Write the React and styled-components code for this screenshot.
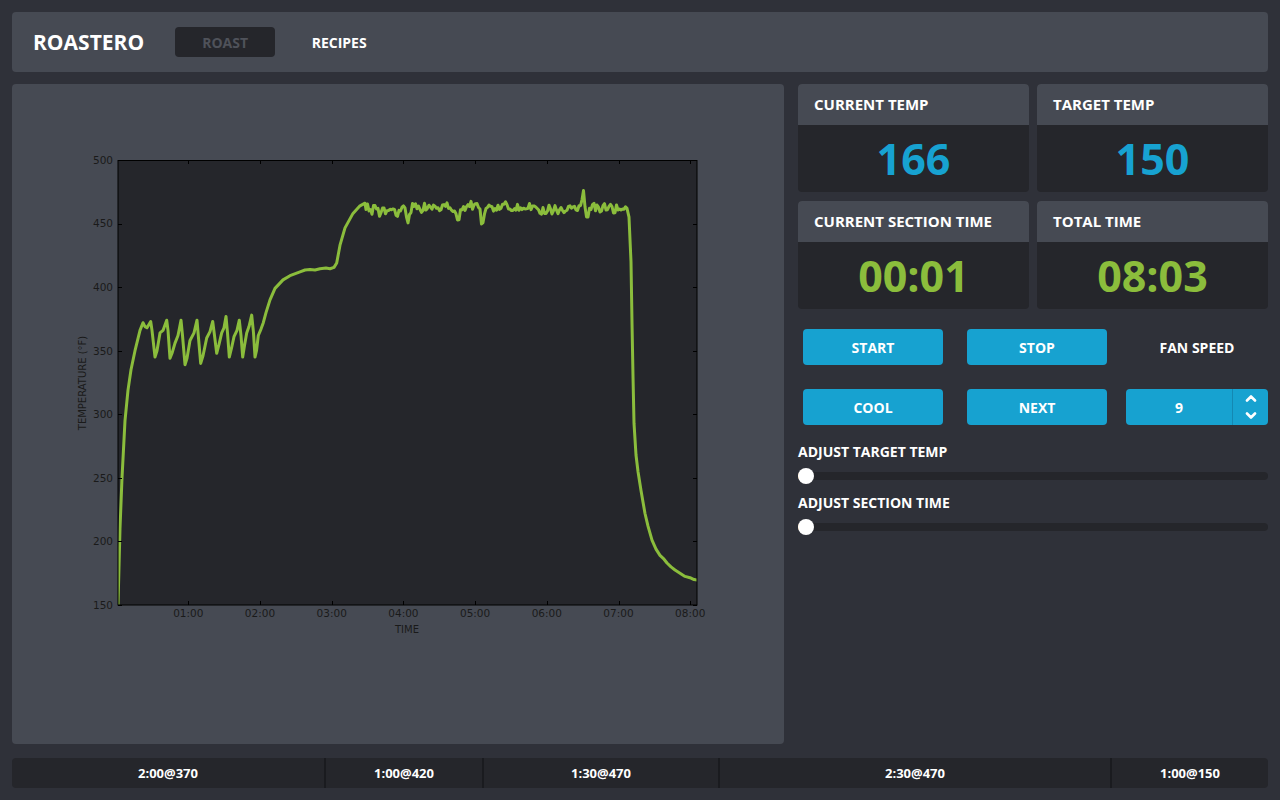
import React from 'react';
import styled, { createGlobalStyle } from 'styled-components';

const GlobalStyle = createGlobalStyle`
  html, body {
    margin: 0;
    padding: 0;
    background: #2f3139;
  }
  body {
    font-family: 'Open Sans', 'Liberation Sans', sans-serif;
    color: #fff;
  }
  * { box-sizing: border-box; }
`;

const Page = styled.div`
  width: 1280px;
  height: 800px;
  padding: 12px;
  display: flex;
  flex-direction: column;
  gap: 12px;
`;

const Header = styled.header`
  height: 60px;
  background: #464a53;
  border-radius: 4px;
  display: flex;
  align-items: center;
  padding-left: 21px;
`;

const Brand = styled.div`
  font-size: 21px;
  font-weight: 700;
  margin-right: 31px;
`;

const Tabs = styled.nav`
  display: flex;
  gap: 14px;
`;

const Tab = styled.div`
  width: 100px;
  height: 30px;
  border-radius: 4px;
  display: flex;
  align-items: center;
  justify-content: center;
  font-size: 14px;
  font-weight: 700;
  background: ${(p) => (p.active ? '#25262b' : 'transparent')};
  color: ${(p) => (p.active ? '#4f525a' : '#fff')};
`;

const Main = styled.main`
  height: 660px;
  display: flex;
  gap: 14px;
`;

const ChartPanel = styled.section`
  width: 772px;
  background: #464a53;
  border-radius: 4px;
  overflow: hidden;

  svg { display: block; }
`;

const Side = styled.aside`
  flex: 1;
  display: flex;
  flex-direction: column;
`;

const CardGrid = styled.div`
  display: grid;
  grid-template-columns: 1fr 1fr;
  column-gap: 8px;
  row-gap: 9px;
`;

const Card = styled.div`
  height: 108px;
  border-radius: 4px;
  overflow: hidden;
  display: flex;
  flex-direction: column;
  background: #25262b;
`;

const CardTitle = styled.div`
  height: 41px;
  background: #464a53;
  padding-left: 16px;
  padding-bottom: 1px;
  display: flex;
  align-items: center;
  font-size: 15px;
  font-weight: 700;
`;

const CardValue = styled.div`
  flex: 1;
  display: flex;
  align-items: center;
  justify-content: center;
  font-size: 43px;
  font-weight: 700;
  color: ${(p) => (p.tone === 'green' ? '#8bbd3c' : '#17a2d1')};
`;

const Controls = styled.div`
  margin-top: 20px;
  padding-left: 5px;
  display: grid;
  grid-template-columns: 140px 24px 140px 19px 142px;
  grid-auto-rows: 36px;
  row-gap: 24px;
`;

const Button = styled.button`
  grid-column: ${(p) => p.col};
  border: none;
  border-radius: 4px;
  background: #17a2d0;
  color: #fff;
  font-family: inherit;
  font-size: 14px;
  font-weight: 700;
  padding: 0;
`;

const FanLabel = styled.div`
  grid-column: 5;
  display: flex;
  align-items: center;
  justify-content: center;
  font-size: 14px;
  font-weight: 700;
`;

const Spinner = styled.div`
  grid-column: 5;
  display: flex;
  border-radius: 4px;
  background: #17a2d0;
  overflow: hidden;
`;

const SpinValue = styled.div`
  flex: 1;
  display: flex;
  align-items: center;
  justify-content: center;
  font-size: 14px;
  font-weight: 700;
`;

const SpinArrows = styled.div`
  width: 36px;
  border-left: 1px solid #1488b2;
  display: flex;
  flex-direction: column;
  align-items: center;
  justify-content: center;
  gap: 10px;

  svg { display: block; }
`;

const Sliders = styled.div`
  margin-top: 17px;
  display: flex;
  flex-direction: column;
  gap: 9px;
`;

const SliderBlock = styled.div`
  display: flex;
  flex-direction: column;
  gap: 6px;
`;

const SliderLabel = styled.div`
  height: 20px;
  line-height: 20px;
  font-size: 14px;
  font-weight: 700;
`;

const Track = styled.div`
  position: relative;
  height: 16px;
  display: flex;
  align-items: center;

  &::before {
    content: '';
    flex: 1;
    height: 8px;
    border-radius: 4px;
    background: #25262b;
  }
`;

const Fill = styled.span`
  position: absolute;
  left: 0;
  top: 4px;
  height: 8px;
  width: 6px;
  border-radius: 4px 0 0 4px;
  background: #e9a23b;
`;

const Thumb = styled.span`
  position: absolute;
  left: 0;
  top: 0;
  width: 16px;
  height: 16px;
  border-radius: 50%;
  background: #fff;
`;

const Footer = styled.footer`
  margin-top: 2px;
  height: 30px;
  display: flex;
  background: #25262b;
  border-radius: 4px;
  overflow: hidden;
`;

const Step = styled.div`
  display: flex;
  align-items: center;
  justify-content: center;
  font-size: 13px;
  font-weight: 700;
  & + & { border-left: 2px solid #1a1b1f; }
`;

// ---- chart data ----
const X0 = 116.6;
const PX_MIN = 71.7;
const tempToY = (t) => 605 - (t - 150) * 1.2714;

const hash = (n) => {
  const s = Math.sin(n * 127.1 + 311.7) * 43758.5453;
  return s - Math.floor(s);
};

const rise = [
  [118, 150], [120, 210], [122, 250], [125, 295], [128, 319], [131, 335], [135, 350], [140, 366],
  [143, 372], [145, 369], [147, 368], [150.7, 373], [152, 366], [155, 345], [157, 350], [160, 364],
  [163, 366], [166.7, 374], [168, 366], [170, 344], [172, 348], [175, 356], [178, 362], [181, 374],
  [182.5, 362], [185, 339], [187, 344], [190, 358], [194, 364], [197, 374], [198.5, 360], [200.7, 340],
  [203, 346], [206.7, 360], [210, 365], [212.7, 373], [214.5, 362], [216.7, 348], [219, 355],
  [221.7, 364], [224, 368], [226, 377], [227.5, 364], [229.3, 345], [231.5, 352], [234, 361],
  [237, 366], [239.3, 374], [241, 362], [242.7, 345], [244.5, 354], [246.7, 364], [249, 369],
  [251.7, 378], [253.5, 364], [255, 345], [256.5, 350], [258.3, 362], [261, 367], [263.3, 372],
  [266, 380], [270, 390], [275, 399], [283, 405.7], [290, 409], [300, 412], [305, 413.5], [310, 414],
  [315, 413.5], [320, 414.5], [326, 415], [330, 414.5], [334, 415.5], [336.7, 419], [340, 433],
  [345, 446.6], [353, 458], [360, 464], [365, 466],
];

const bumps = [
  [371, -4], [379, -5], [386, -3], [397, -9], [408, -15], [420, -3], [438, -2], [452, -5],
  [458, -10], [482, -12], [496, -4], [520, -3], [540, -7], [546, -8], [552, -6], [558, -8],
  [565, -4], [583, 11], [587, -7], [600, -3], [614, -4], [445, 3], [470, 2], [505, 2],
];

const plateau = [];
for (let x = 366; x <= 626; x += 1.5) {
  let t = 463 + (hash(Math.floor(x / 1.5)) - 0.5) * 6;
  bumps.forEach(([c, a]) => {
    const d = (x - c) / 2;
    t += a * Math.exp(-d * d);
  });
  plateau.push([x, t]);
}

const fall = [
  [627, 462], [629, 455], [631, 420], [632, 372], [633, 330], [634, 293], [636, 268], [638, 255],
  [641, 240], [645, 222], [648, 212], [652, 201], [656, 194], [660, 189], [664, 186], [667, 183],
  [671, 180], [675, 177.5], [680, 175], [685, 172.5], [690, 171.5], [694, 170], [698, 169.5],
];

const points = [...rise, ...plateau, ...fall];
const linePath = points
  .map(([x, t], i) => `${i ? 'L' : 'M'}${x.toFixed(1)} ${tempToY(t).toFixed(1)}`)
  .join(' ');

const yTicks = [150, 200, 250, 300, 350, 400, 450, 500];
const xTicks = [1, 2, 3, 4, 5, 6, 7, 8];

const Chart = () => (
  <svg width="772" height="660" viewBox="12 84 772 660">
    <defs>
      <clipPath id="plot">
        <rect x="118" y="160" width="579" height="445" />
      </clipPath>
    </defs>
    <rect x="118" y="160" width="579" height="445" fill="#25262b" />
    <path
      d={linePath}
      fill="none"
      stroke="#8bbd3c"
      strokeWidth="3"
      strokeLinejoin="round"
      strokeLinecap="round"
      clipPath="url(#plot)"
    />
    <g stroke="#000" strokeWidth="1">
      {yTicks.map((t) => {
        const y = Math.round(tempToY(t)) + 0.5;
        return (
          <g key={t}>
            <line x1="118" x2="122" y1={y} y2={y} />
            <line x1="693" x2="697" y1={y} y2={y} />
          </g>
        );
      })}
      {xTicks.map((m) => {
        const x = Math.round(X0 + m * PX_MIN) + 0.5;
        return (
          <g key={m}>
            <line x1={x} x2={x} y1="160" y2="164" />
            <line x1={x} x2={x} y1="601" y2="605" />
          </g>
        );
      })}
    </g>
    <rect x="118" y="160.5" width="579" height="444.5" fill="none" stroke="#000" strokeWidth="1" />
    <g fontFamily="'DejaVu Sans', sans-serif" fontSize="10.5" fill="#1a1a1a">
      {yTicks.map((t) => (
        <text key={t} x="113" y={tempToY(t) + 3.8} textAnchor="end">
          {t}
        </text>
      ))}
      {xTicks.map((m) => (
        <text key={m} x={X0 + m * PX_MIN} y="617" textAnchor="middle">
          {`0${m}:00`}
        </text>
      ))}
      <text x="407" y="633" textAnchor="middle" fontSize="10">
        TIME
      </text>
      <text
        x="0"
        y="0"
        fontSize="10"
        textAnchor="middle"
        transform="translate(86 383) rotate(-90)"
      >
        TEMPERATURE (°F)
      </text>
    </g>
  </svg>
);

const Chevron = ({ up }) => (
  <svg width="12" height="7" viewBox="0 0 12 7">
    <path
      d={up ? 'M2 5.5 L6 1.5 L10 5.5' : 'M2 1.5 L6 5.5 L10 1.5'}
      fill="none"
      stroke="#fff"
      strokeWidth="2.6"
      strokeLinecap="round"
      strokeLinejoin="round"
    />
  </svg>
);

const stats = [
  { title: 'CURRENT TEMP', value: '166', tone: 'blue' },
  { title: 'TARGET TEMP', value: '150', tone: 'blue' },
  { title: 'CURRENT SECTION TIME', value: '00:01', tone: 'green' },
  { title: 'TOTAL TIME', value: '08:03', tone: 'green' },
];

const steps = [
  { label: '2:00@370', secs: 120 },
  { label: '1:00@420', secs: 60 },
  { label: '1:30@470', secs: 90 },
  { label: '2:30@470', secs: 150 },
  { label: '1:00@150', secs: 60 },
];

const App = () => {
  return (
    <>
      <GlobalStyle />
      <Page>
        <Header>
          <Brand>ROASTERO</Brand>
          <Tabs>
            <Tab active>ROAST</Tab>
            <Tab>RECIPES</Tab>
          </Tabs>
        </Header>

        <Main>
          <ChartPanel>
            <Chart />
          </ChartPanel>

          <Side>
            <CardGrid>
              {stats.map((s) => (
                <Card key={s.title}>
                  <CardTitle>{s.title}</CardTitle>
                  <CardValue tone={s.tone}>{s.value}</CardValue>
                </Card>
              ))}
            </CardGrid>

            <Controls>
              <Button col={1}>START</Button>
              <Button col={3}>STOP</Button>
              <FanLabel>FAN SPEED</FanLabel>
              <Button col={1}>COOL</Button>
              <Button col={3}>NEXT</Button>
              <Spinner>
                <SpinValue>9</SpinValue>
                <SpinArrows>
                  <Chevron up />
                  <Chevron />
                </SpinArrows>
              </Spinner>
            </Controls>

            <Sliders>
              <SliderBlock>
                <SliderLabel>ADJUST TARGET TEMP</SliderLabel>
                <Track>
                  <Fill />
                  <Thumb />
                </Track>
              </SliderBlock>
              <SliderBlock>
                <SliderLabel>ADJUST SECTION TIME</SliderLabel>
                <Track>
                  <Fill />
                  <Thumb />
                </Track>
              </SliderBlock>
            </Sliders>
          </Side>
        </Main>

        <Footer>
          {steps.map((s) => (
            <Step key={s.label} style={{ flex: s.secs }}>
              {s.label}
            </Step>
          ))}
        </Footer>
      </Page>
    </>
  );
};

export default App;
